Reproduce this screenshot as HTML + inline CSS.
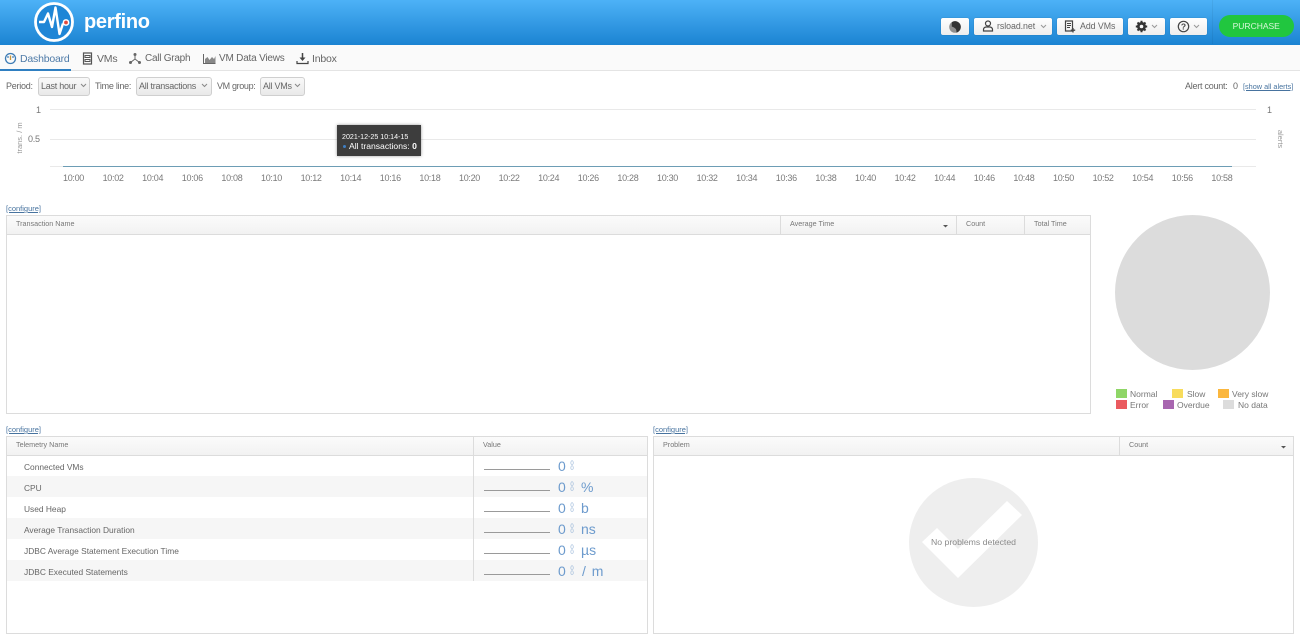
<!DOCTYPE html>
<html><head><meta charset="utf-8"><title>perfino</title>
<style>
html,body{margin:0;padding:0;width:1300px;height:636px;overflow:hidden;background:#fff;font-family:"Liberation Sans",sans-serif;color:#666}
.a{position:absolute;white-space:nowrap}
.hdr{left:0;top:0;width:1300px;height:44.5px;background:linear-gradient(#4db2f7,#1b83d2)}
.tabs{left:0;top:45px;width:1300px;height:25px;background:#fafafa;border-bottom:1px solid #e4e4e4}
.tab{font-size:10.5px;letter-spacing:-.2px;line-height:14px;top:52px;color:#666}
.btn{top:18px;height:17px;background:linear-gradient(#fff,#eee);border-radius:2px;box-shadow:0 0 1px rgba(0,0,0,.3);font-size:8.8px;letter-spacing:-.05px;line-height:17px;color:#666}
.lbl{font-size:9px;letter-spacing:-.25px;line-height:12px;color:#666}
.sel{top:77px;height:17px;border:1px solid #cfcfcf;border-radius:3px;background:linear-gradient(#f9f9f9,#e9e9e9);font-size:9px;letter-spacing:-.25px;line-height:17px;color:#666;box-sizing:content-box}
.link{font-size:7.5px;line-height:10px;color:#47739f;text-decoration:underline}
.tbl{border:1px solid #dcdcdc;box-sizing:border-box;background:#fff}
.th{height:18px;background:linear-gradient(#fbfbfb,#f2f2f2);border-bottom:1px solid #dcdcdc;box-sizing:content-box}
.thl{font-size:7.2px;line-height:10px;color:#777}
.v{width:1px;background:#dcdcdc}
.row{left:7px;width:640px;height:21px}
.alt{background:#f6f6f6}
.name{left:24px;font-size:8.4px;line-height:12px;color:#666}
.num{font-size:14px;line-height:16px;color:#6d9bcd}
.spark{left:484px;width:66px;height:1px;background:#9a9a9a}
.dots{left:569.500px;width:5px;font-size:6px;line-height:5.500px;color:#8fb0d5;white-space:normal;text-align:center}
.x{top:172px;font-size:9px;letter-spacing:-.3px;line-height:12px;color:#7a7a7a;width:40px;text-align:center}
.sw{width:11px;height:9px}
.lg{font-size:8.5px;line-height:11px;color:#777}
.tip{left:337px;top:125px;width:84px;height:31px;background:#3d3d3d;box-shadow:0 0 3px rgba(0,0,0,.4);color:#fff}
</style></head><body>

<div class="a hdr"></div>
<svg class="a" style="left:32.500px;top:1px" width="42" height="42" viewBox="0 0 42 42">
  <circle cx="21" cy="21" r="18.500" fill="#1f86d6" stroke="#fff" stroke-width="2.800"/>
  <path d="M6 21H11L15 12.500L19 26L22.500 6.500L26.500 33L30 22.500" fill="none" stroke="#fff" stroke-width="2.400" stroke-linejoin="round"/>
  <circle cx="33" cy="21.500" r="3.400" fill="#fff"/><circle cx="33" cy="21.500" r="1.900" fill="#e2493d"/>
</svg>
<div class="a" style="left:84px;top:7px;font-size:20px;line-height:30px;font-weight:bold;color:#fff;letter-spacing:-.3px">perfino</div>

<div class="a btn" style="left:941px;width:27.500px"></div>
<svg class="a" style="left:947.500px;top:19.500px" width="14" height="14" viewBox="0 0 14 14"><circle cx="7" cy="7" r="5.800" fill="#8f8f8f"/><path d="M3.800 2.200A5.800 5.800 0 0 1 12.800 7A5.800 5.800 0 0 1 8.500 12.600Q9 8 3.800 6.500Z" fill="#333"/></svg>
<div class="a btn" style="left:974px;width:78px;padding-left:23px;box-sizing:border-box">rsload.net</div>
<svg class="a" style="left:982px;top:20px" width="12" height="12" viewBox="0 0 12 12"><circle cx="6" cy="3.500" r="2.500" fill="none" stroke="#444" stroke-width="1.200"/><path d="M1.500 11V9.500Q1.500 7.500 4 7H8Q10.500 7.500 10.500 9.500V11Z" fill="none" stroke="#444" stroke-width="1.200"/></svg>
<svg class="a" style="left:1039.500px;top:24px" width="7" height="5" viewBox="0 0 7 5"><path d="M1 1L3.500 3.500L6 1" fill="none" stroke="#999"/></svg>
<div class="a btn" style="left:1057px;width:65.500px;padding-left:23px;box-sizing:border-box">Add VMs</div>
<svg class="a" style="left:1064px;top:20px" width="12" height="13" viewBox="0 0 12 13"><path d="M1.500 1H8.500V11H1.500Z" fill="none" stroke="#444" stroke-width="1.200"/><path d="M3 3.500H7M3 5.500H7M3 7.500H6" stroke="#444"/><path d="M9 8V12.500M6.800 10.200H11.200" stroke="#444" stroke-width="1.300"/></svg>
<div class="a btn" style="left:1128px;width:36.500px"></div>
<svg class="a" style="left:1134.500px;top:19.500px" width="13" height="13" viewBox="0 0 13 13"><circle cx="6.500" cy="6.500" r="3.300" fill="none" stroke="#333" stroke-width="2.400"/><path d="M6.500 .8V12.200M.8 6.500H12.200M2.500 2.500L10.500 10.500M10.500 2.500L2.500 10.500" stroke="#333" stroke-width="2"/><circle cx="6.500" cy="6.500" r="1.800" fill="#f5f5f5"/></svg>
<svg class="a" style="left:1151px;top:24px" width="7" height="5" viewBox="0 0 7 5"><path d="M1 1L3.500 3.500L6 1" fill="none" stroke="#999"/></svg>
<div class="a btn" style="left:1170px;width:36.500px"></div>
<svg class="a" style="left:1176.500px;top:19.500px" width="13" height="13" viewBox="0 0 13 13"><circle cx="6.500" cy="6.500" r="5.200" fill="none" stroke="#444" stroke-width="1.200"/><text x="6.500" y="9.500" font-family="Liberation Sans" font-size="8.500" font-weight="bold" text-anchor="middle" fill="#444">?</text></svg>
<svg class="a" style="left:1193px;top:24px" width="7" height="5" viewBox="0 0 7 5"><path d="M1 1L3.500 3.500L6 1" fill="none" stroke="#999"/></svg>
<div class="a" style="left:1212px;top:0;width:1px;height:44px;background:rgba(0,0,0,.05)"></div>
<div class="a" style="left:1218.500px;top:15px;width:75.500px;height:22px;background:#21c63f;border-radius:11px;color:#d9f7d9;font-size:8.500px;line-height:23px;text-align:center">PURCHASE</div>

<div class="a tabs"></div>
<div class="a" style="left:0;top:69px;width:71px;height:2px;background:#2f7fc1"></div>
<svg class="a" style="left:4px;top:52px" width="13" height="13" viewBox="0 0 13 13"><circle cx="6.500" cy="6.500" r="5" fill="none" stroke="#3d7cb5" stroke-width="1.300"/><circle cx="4" cy="5" r=".9" fill="#3d7cb5"/><circle cx="9" cy="5" r=".9" fill="#3d7cb5"/><path d="M6.500 3.500V8" stroke="#c9963a" stroke-width="1.300"/></svg>
<div class="a tab" style="left:20px;color:#4f7ba8">Dashboard</div>
<svg class="a" style="left:82px;top:52px" width="11" height="13" viewBox="0 0 11 13"><path d="M1.500 1H9.500V12H1.500Z" fill="none" stroke="#555" stroke-width="1.200"/><path d="M3 3.500H8V5.500H3ZM3 7.500H8V9.500H3Z" fill="none" stroke="#555"/></svg>
<div class="a tab" style="left:97px">VMs</div>
<svg class="a" style="left:128px;top:52px" width="14" height="13" viewBox="0 0 14 13"><path d="M7 2.500V7L2.500 10.500M7 7L11.500 10.500" fill="none" stroke="#666"/><circle cx="7" cy="2.500" r="1.500" fill="#666"/><circle cx="2.500" cy="10.500" r="1.500" fill="#666"/><circle cx="11.500" cy="10.500" r="1.500" fill="#666"/></svg>
<div class="a tab" style="left:145px;font-size:10px;letter-spacing:-.25px">Call Graph</div>
<svg class="a" style="left:203px;top:52px" width="13" height="13" viewBox="0 0 13 13"><path d="M.5 2V11.500H12.500" fill="none" stroke="#666"/><path d="M2 11V7L4.500 5L6.500 8L9 5L11 7L12.500 4V11Z" fill="#888"/></svg>
<div class="a tab" style="left:219px;font-size:10px;letter-spacing:-.2px">VM Data Views</div>
<svg class="a" style="left:296px;top:52px" width="13" height="13" viewBox="0 0 13 13"><path d="M6.500 1V7.500" stroke="#444" stroke-width="1.500"/><path d="M3.500 5.500L6.500 9L9.500 5.500Z" fill="#444"/><path d="M1 9V11.500H12V9" fill="none" stroke="#444" stroke-width="1.200"/></svg>
<div class="a tab" style="left:312px">Inbox</div>

<div class="a lbl" style="left:6px;top:80px">Period:</div>
<div class="a sel" style="left:38px;width:48px;padding-left:2px">Last hour</div>
<div class="a lbl" style="left:95px;top:80px">Time line:</div>
<div class="a sel" style="left:136px;width:72px;padding-left:2px">All transactions</div>
<div class="a lbl" style="left:217px;top:80px;letter-spacing:-.35px">VM group:</div>
<div class="a sel" style="left:260px;width:41px;padding-left:2px">All VMs</div>
<svg class="a" style="left:80px;top:83px" width="7" height="5" viewBox="0 0 7 5"><path d="M1 1L3.500 3.500L6 1" fill="none" stroke="#888"/></svg>
<svg class="a" style="left:201px;top:83px" width="7" height="5" viewBox="0 0 7 5"><path d="M1 1L3.500 3.500L6 1" fill="none" stroke="#888"/></svg>
<svg class="a" style="left:294px;top:83px" width="7" height="5" viewBox="0 0 7 5"><path d="M1 1L3.500 3.500L6 1" fill="none" stroke="#888"/></svg>
<div class="a lbl" style="left:1185px;top:80px">Alert count:</div>
<div class="a lbl" style="left:1233px;top:80px">0</div>
<div class="a link" style="left:1243px;top:82px;font-size:7.300px">[show all alerts]</div>

<div class="a" style="left:50px;top:109px;width:1206px;height:1px;background:#e9e9e9"></div>
<div class="a" style="left:50px;top:139px;width:1206px;height:1px;background:#e9e9e9"></div>
<div class="a" style="left:50px;top:166px;width:1206px;height:1px;background:#e9e9e9"></div>
<div class="a" style="left:63px;top:166px;width:1169px;height:1px;background:#6d9db5"></div>
<div class="a lbl" style="left:36px;top:104px;color:#777">1</div>
<div class="a lbl" style="left:28px;top:132.500px;color:#777">0.5</div>
<div class="a lbl" style="left:1267px;top:104px;color:#777">1</div>
<div class="a" style="left:0;top:133px;width:40px;text-align:center;font-size:7.500px;line-height:10px;color:#999;transform:rotate(-90deg)">trans. / m</div>
<div class="a" style="left:1260px;top:134px;width:40px;text-align:center;font-size:7.500px;line-height:10px;color:#999;transform:rotate(90deg)">alerts</div>

<div class="a x" style="left:53.500px">10:00</div><div class="a x" style="left:93.100px">10:02</div><div class="a x" style="left:132.700px">10:04</div><div class="a x" style="left:172.300px">10:06</div><div class="a x" style="left:211.900px">10:08</div><div class="a x" style="left:251.500px">10:10</div><div class="a x" style="left:291.100px">10:12</div><div class="a x" style="left:330.700px">10:14</div><div class="a x" style="left:370.300px">10:16</div><div class="a x" style="left:409.900px">10:18</div><div class="a x" style="left:449.500px">10:20</div><div class="a x" style="left:489.100px">10:22</div><div class="a x" style="left:528.700px">10:24</div><div class="a x" style="left:568.300px">10:26</div><div class="a x" style="left:607.900px">10:28</div><div class="a x" style="left:647.500px">10:30</div><div class="a x" style="left:687.100px">10:32</div><div class="a x" style="left:726.700px">10:34</div><div class="a x" style="left:766.300px">10:36</div><div class="a x" style="left:805.900px">10:38</div><div class="a x" style="left:845.500px">10:40</div><div class="a x" style="left:885.100px">10:42</div><div class="a x" style="left:924.700px">10:44</div><div class="a x" style="left:964.300px">10:46</div><div class="a x" style="left:1003.900px">10:48</div><div class="a x" style="left:1043.500px">10:50</div><div class="a x" style="left:1083.100px">10:52</div><div class="a x" style="left:1122.700px">10:54</div><div class="a x" style="left:1162.300px">10:56</div><div class="a x" style="left:1201.900px">10:58</div>

<div class="a tip"></div>
<div class="a" style="left:342px;top:131.500px;font-size:7.100px;line-height:10px;color:#fff">2021-12-25 10:14-15</div>
<div class="a" style="left:343px;top:145px;width:3px;height:3px;border-radius:50%;background:#3f7fc4"></div>
<div class="a" style="left:349px;top:140px;font-size:8.600px;line-height:12px;color:#fff">All transactions: <b>0</b></div>

<div class="a link" style="left:6px;top:204px">[configure]</div>
<div class="a tbl" style="left:6px;top:215px;width:1085px;height:199px"><div class="th"></div></div>
<div class="a v" style="left:780px;top:216px;height:18px"></div>
<div class="a v" style="left:956px;top:216px;height:18px"></div>
<div class="a v" style="left:1024px;top:216px;height:18px"></div>
<div class="a thl" style="left:16px;top:219px">Transaction Name</div>
<div class="a thl" style="left:790px;top:219px">Average Time</div>
<svg class="a" style="left:942px;top:224px" width="7" height="4"><path d="M1 1H6L3.500 3.500Z" fill="#555"/></svg>
<div class="a thl" style="left:966px;top:219px">Count</div>
<div class="a thl" style="left:1034px;top:219px">Total Time</div>

<div class="a" style="left:1114.500px;top:215px;width:155px;height:155px;border-radius:50%;background:#dcdcdc"></div>
<div class="a sw" style="left:1116px;top:389px;background:#8fd667"></div><div class="a lg" style="left:1130px;top:389px">Normal</div>
<div class="a sw" style="left:1172px;top:389px;background:#f8dc5c"></div><div class="a lg" style="left:1187px;top:389px">Slow</div>
<div class="a sw" style="left:1218px;top:389px;background:#fbb73e"></div><div class="a lg" style="left:1232px;top:389px">Very slow</div>
<div class="a sw" style="left:1116px;top:400px;background:#ea5a5f"></div><div class="a lg" style="left:1130px;top:400px">Error</div>
<div class="a sw" style="left:1163px;top:400px;background:#a866b0"></div><div class="a lg" style="left:1177px;top:400px">Overdue</div>
<div class="a sw" style="left:1223px;top:400px;background:#dcdcdc"></div><div class="a lg" style="left:1238px;top:400px">No data</div>

<div class="a link" style="left:6px;top:425px">[configure]</div>
<div class="a tbl" style="left:6px;top:436px;width:642px;height:198px"><div class="th"></div></div>
<div class="a thl" style="left:16px;top:440px">Telemetry Name</div>
<div class="a thl" style="left:483px;top:440px">Value</div>
<div class="a row alt" style="top:476px"></div>
<div class="a row alt" style="top:518px"></div>
<div class="a row alt" style="top:560px"></div>
<div class="a v" style="left:473px;top:437px;height:144px"></div>

<div class="a name" style="left:24px;top:461px">Connected VMs</div>
<div class="a name" style="left:24px;top:482px">CPU</div>
<div class="a name" style="left:24px;top:503px">Used Heap</div>
<div class="a name" style="left:24px;top:524px">Average Transaction Duration</div>
<div class="a name" style="left:24px;top:545px">JDBC Average Statement Execution Time</div>
<div class="a name" style="left:24px;top:566px">JDBC Executed Statements</div>

<div class="a spark" style="top:469px"></div><div class="a spark" style="top:490px"></div><div class="a spark" style="top:511px"></div><div class="a spark" style="top:532px"></div><div class="a spark" style="top:553px"></div><div class="a spark" style="top:574px"></div>
<div class="a num" style="left:558px;top:458px">0</div>
<div class="a num" style="left:558px;top:479px">0</div>
<div class="a num" style="left:558px;top:500px">0</div>
<div class="a num" style="left:558px;top:521px">0</div>
<div class="a num" style="left:558px;top:542px">0</div>
<div class="a num" style="left:558px;top:563px">0</div>
<div class="a dots" style="top:461.500px">0<br>0</div>
<div class="a dots" style="top:482.500px">0<br>0</div>
<div class="a dots" style="top:503.500px">0<br>0</div>
<div class="a dots" style="top:524.500px">0<br>0</div>
<div class="a dots" style="top:545.500px">0<br>0</div>
<div class="a dots" style="top:566.500px">0<br>0</div>
<div class="a num" style="left:581px;top:479px">%</div>
<div class="a num" style="left:581px;top:500px">b</div>
<div class="a num" style="left:581px;top:521px">ns</div>
<div class="a num" style="left:581px;top:542px">µs</div>
<div class="a num" style="left:582px;top:563px;word-spacing:2px">/ m</div>

<div class="a link" style="left:653px;top:425px">[configure]</div>
<div class="a tbl" style="left:653px;top:436px;width:641px;height:198px"><div class="th"></div></div>
<div class="a v" style="left:1119px;top:437px;height:18px"></div>
<div class="a thl" style="left:663px;top:440px">Problem</div>
<div class="a thl" style="left:1129px;top:440px">Count</div>
<svg class="a" style="left:1280px;top:445px" width="7" height="4"><path d="M1 1H6L3.500 3.500Z" fill="#555"/></svg>

<svg class="a" style="left:909px;top:478px" width="129" height="129" viewBox="909 478 129 129"><circle cx="973.500" cy="542.500" r="64.500" fill="#eeeeee"/><path d="M937 528L922 542L958 578L1022 515L1007 501L958 549Z" fill="#fff"/></svg>
<div class="a" style="left:931px;top:537px;font-size:8.700px;line-height:11px;color:#8a8a8a">No problems detected</div>
</body></html>
